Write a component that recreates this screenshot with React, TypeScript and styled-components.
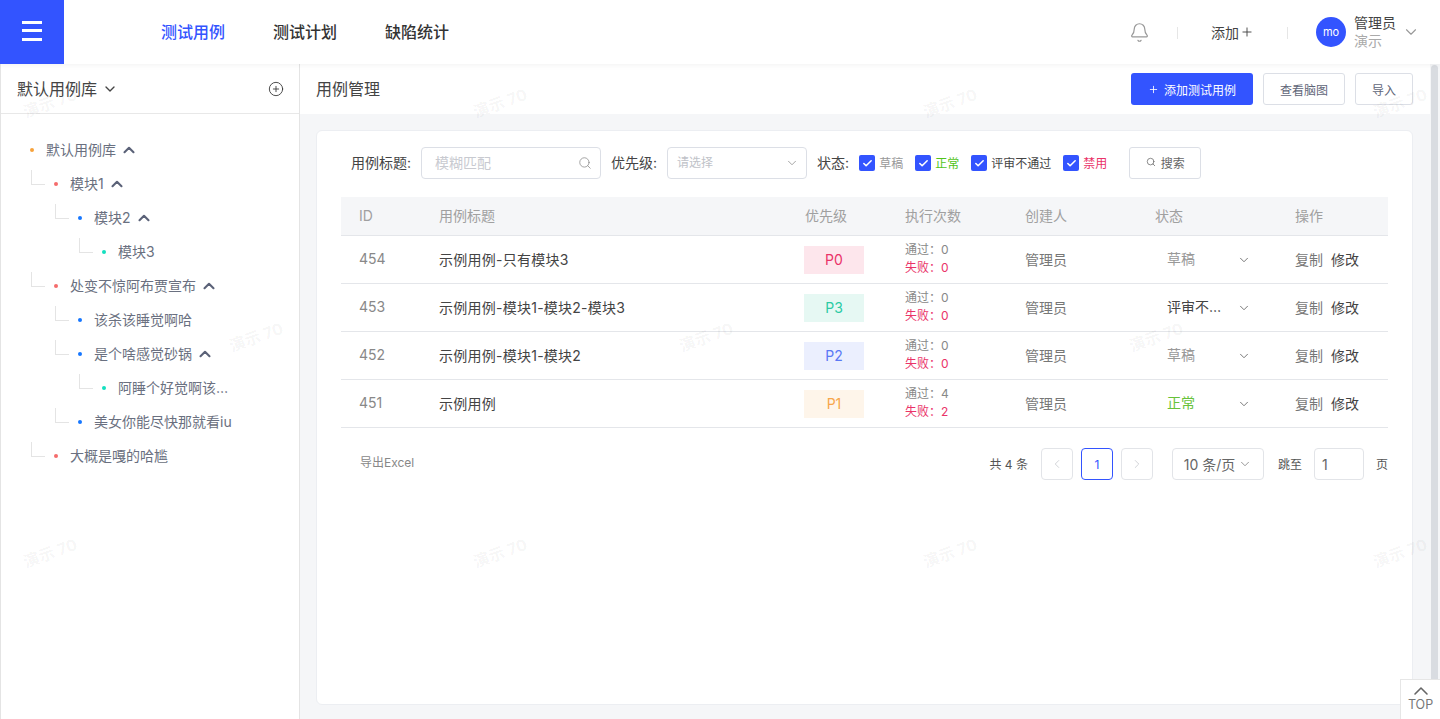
import React from 'react';
import styled, { createGlobalStyle } from 'styled-components';
import {
  Bell,
  Check,
  ChevronDown,
  ChevronLeft,
  ChevronRight,
  ChevronUp,
  CirclePlus,
  Plus,
  Search,
} from 'lucide-react';

const BLUE = '#3354ff';

const GlobalStyle = createGlobalStyle`
  html, body {
    margin: 0;
    height: 100%;
    overflow: hidden;
    background: #fff;
    font-family: Inter, "Noto Sans CJK SC", "Noto Sans", sans-serif;
    color: #333;
  }
  * { box-sizing: border-box; }
`;

type TreeNode = { label: string; level: number; color: string; open?: boolean };

const treeNodes: TreeNode[] = [
  { label: '默认用例库', level: 0, color: '#f7a23b', open: true },
  { label: '模块1', level: 1, color: '#f56c6c', open: true },
  { label: '模块2', level: 2, color: '#1677ff', open: true },
  { label: '模块3', level: 3, color: '#13e0c0' },
  { label: '处变不惊阿布贾宣布', level: 1, color: '#f56c6c', open: true },
  { label: '该杀该睡觉啊哈', level: 2, color: '#1677ff' },
  { label: '是个啥感觉砂锅', level: 2, color: '#1677ff', open: true },
  { label: '阿睡个好觉啊该…', level: 3, color: '#13e0c0' },
  { label: '美女你能尽快那就看iu', level: 2, color: '#1677ff' },
  { label: '大概是嘎的哈尴', level: 1, color: '#f56c6c' },
];

const priorities: Record<string, { bg: string; fg: string }> = {
  P0: { bg: '#fde6ec', fg: '#ea3368' },
  P1: { bg: '#fef5ea', fg: '#f7a64a' },
  P2: { bg: '#ebeffe', fg: '#5a78f5' },
  P3: { bg: '#e6f8f3', fg: '#2ccba4' },
};

const cases = [
  { id: 454, title: '示例用例-只有模块3', pri: 'P0', pass: 0, fail: 0, status: '草稿', statusColor: '#999' },
  { id: 453, title: '示例用例-模块1-模块2-模块3', pri: 'P3', pass: 0, fail: 0, status: '评审不…', statusColor: '#444' },
  { id: 452, title: '示例用例-模块1-模块2', pri: 'P2', pass: 0, fail: 0, status: '草稿', statusColor: '#999' },
  { id: 451, title: '示例用例', pri: 'P1', pass: 4, fail: 2, status: '正常', statusColor: '#67c23a' },
];

const statuses = [
  { label: '草稿', color: '#999' },
  { label: '正常', color: '#52c41a' },
  { label: '评审不通过', color: '#444' },
  { label: '禁用', color: '#ea3368' },
];

const marks = [
  ...[22, 472, 922, 1372].map((x) => ({ x, y: 90 })),
  ...[228, 678, 1128].map((x) => ({ x, y: 324 })),
  ...[22, 472, 922, 1372].map((x) => ({ x, y: 540 })),
];

export default function App() {
  return (
    <>
      <GlobalStyle />
      <Page>
        <Header>
          <MenuButton aria-label="菜单">
            <MenuBars />
          </MenuButton>
          <Nav>
            <NavItem $active>测试用例</NavItem>
            <NavItem>测试计划</NavItem>
            <NavItem>缺陷统计</NavItem>
          </Nav>
          <HeaderRight>
            <Bell size={21} strokeWidth={1.4} color="#999" />
            <Divider />
            <AddLink>
              添加
              <Plus size={14} strokeWidth={1.6} />
            </AddLink>
            <Divider />
            <UserBox>
              <Avatar>mo</Avatar>
              <UserText>
                <UserName>管理员</UserName>
                <UserRole>演示</UserRole>
              </UserText>
              <ChevronDown size={18} strokeWidth={1.5} color="#999" />
            </UserBox>
          </HeaderRight>
        </Header>
        <Body>
          <Sidebar>
            <SideHead>
              <LibraryName>
                <LibraryText>默认用例库</LibraryText>
                <ChevronDown size={16} strokeWidth={2} color="#444" />
              </LibraryName>
              <CirclePlus size={16} strokeWidth={1.3} color="#333" />
            </SideHead>
            <Tree>
              {treeNodes.map((node) => (
                <TreeRow key={node.label} $level={node.level}>
                  <TreeDot $color={node.color} />
                  <TreeLabel>{node.label}</TreeLabel>
                  {node.open && <ChevronUp size={18} strokeWidth={2.8} color="#5b6278" />}
                </TreeRow>
              ))}
            </Tree>
          </Sidebar>
          <Main>
            <TitleBar>
              <Title>用例管理</Title>
              <TitleActions>
                <PrimaryButton>
                  <Plus size={11} strokeWidth={1.8} />
                  添加测试用例
                </PrimaryButton>
                <GhostButton $width={82}>查看脑图</GhostButton>
                <GhostButton $width={58}>导入</GhostButton>
              </TitleActions>
            </TitleBar>
            <Content>
              <Card>
                <Filters>
                  <FilterLabel>用例标题:</FilterLabel>
                  <TextBox $width={180}>
                    <Placeholder>模糊匹配</Placeholder>
                    <Search size={14} strokeWidth={1.3} color="#888" />
                  </TextBox>
                  <FilterLabel>优先级:</FilterLabel>
                  <SelectBox>
                    <SmallPlaceholder>请选择</SmallPlaceholder>
                    <ChevronDown size={14} strokeWidth={1.3} color="#888" />
                  </SelectBox>
                  <FilterLabel>状态:</FilterLabel>
                  <CheckGroup>
                    {statuses.map((s) => (
                      <CheckItem key={s.label} $color={s.color}>
                        <CheckBox>
                          <Check size={11} strokeWidth={3.4} color="#fff" />
                        </CheckBox>
                        <CheckText>{s.label}</CheckText>
                      </CheckItem>
                    ))}
                  </CheckGroup>
                  <SearchButton>
                    <Search size={10} strokeWidth={1.8} />
                    搜索
                  </SearchButton>
                </Filters>
                <Table>
                  <HeadRow>
                    <HeadCell>ID</HeadCell>
                    <HeadCell>用例标题</HeadCell>
                    <HeadCell>优先级</HeadCell>
                    <HeadCell>执行次数</HeadCell>
                    <HeadCell>创建人</HeadCell>
                    <HeadCell>状态</HeadCell>
                    <HeadCell>操作</HeadCell>
                  </HeadRow>
                  {cases.map((c) => (
                    <DataRow key={c.id}>
                      <IdCell>{c.id}</IdCell>
                      <TitleCell>{c.title}</TitleCell>
                      <PriorityTag $bg={priorities[c.pri].bg} $fg={priorities[c.pri].fg}>
                        {c.pri}
                      </PriorityTag>
                      <Counts>
                        <PassCount>通过：{c.pass}</PassCount>
                        <FailCount>失败：{c.fail}</FailCount>
                      </Counts>
                      <Creator>管理员</Creator>
                      <StatusSelect $color={c.statusColor}>
                        <StatusText>{c.status}</StatusText>
                        <ChevronDown size={14} strokeWidth={1.5} color="#666" />
                      </StatusSelect>
                      <Operations>
                        <span>复制</span>
                        <span>修改</span>
                      </Operations>
                    </DataRow>
                  ))}
                </Table>
                <TableFoot>
                  <ExportLink>导出Excel</ExportLink>
                  <Pager>
                    <PagerText>共 4 条</PagerText>
                    <PageButton $disabled>
                      <ChevronLeft size={14} strokeWidth={1.3} />
                    </PageButton>
                    <PageButton $active>1</PageButton>
                    <PageButton $disabled>
                      <ChevronRight size={14} strokeWidth={1.3} />
                    </PageButton>
                    <PageSize>
                      10 条/页
                      <ChevronDown size={14} strokeWidth={1.3} color="#777" />
                    </PageSize>
                    <PagerText>跳至</PagerText>
                    <JumpInput>1</JumpInput>
                    <PagerText>页</PagerText>
                  </Pager>
                </TableFoot>
              </Card>
            </Content>
          </Main>
          <ScrollTrack>
            <ScrollThumb />
          </ScrollTrack>
        </Body>
        {marks.map((m) => (
          <Watermark key={`${m.x}-${m.y}`} style={{ left: m.x, top: m.y }}>
            演示 70
          </Watermark>
        ))}
        <BackTop>
          <ChevronUp size={24} strokeWidth={1.6} color="#666" />
          <BackTopText>TOP</BackTopText>
        </BackTop>
      </Page>
    </>
  );
}

const Page = styled.div`
  position: relative;
  display: flex;
  flex-direction: column;
  height: 100vh;
  overflow: hidden;
`;

const Header = styled.header`
  position: relative;
  z-index: 2;
  display: flex;
  align-items: center;
  height: 64px;
  flex-shrink: 0;
  background: #fff;
  box-shadow: 0 1px 6px rgba(0, 0, 0, 0.06);
`;

const MenuButton = styled.div`
  display: flex;
  align-items: center;
  justify-content: center;
  width: 64px;
  height: 64px;
  background: ${BLUE};
`;

const MenuBars = styled.div`
  position: relative;
  width: 20px;
  height: 20px;
  margin-top: -2px;
  border-top: 3px solid #fff;
  border-bottom: 3px solid #fff;

  &::after {
    content: '';
    position: absolute;
    left: 0;
    right: 0;
    top: 5px;
    height: 3px;
    background: #fff;
  }
`;

const Nav = styled.nav`
  display: flex;
  gap: 48px;
  margin-left: 97px;
`;

const NavItem = styled.a<{ $active?: boolean }>`
  font-size: 16px;
  font-weight: 500;
  line-height: 24px;
  color: ${(p) => (p.$active ? BLUE : '#333')};
`;

const HeaderRight = styled.div`
  display: flex;
  align-items: center;
  margin-left: auto;
  padding-right: 20px;
`;

const Divider = styled.i`
  width: 1px;
  height: 12px;
  margin: 2px 33px 0;
  background: #e6e6e6;

  &:first-of-type {
    margin-left: 27px;
  }
`;

const AddLink = styled.div`
  display: flex;
  align-items: center;
  gap: 1px;
  font-size: 14px;
  color: #444;
`;

const UserBox = styled.div`
  display: flex;
  align-items: center;
  margin-left: -5px;
`;

const Avatar = styled.div`
  display: flex;
  align-items: center;
  justify-content: center;
  width: 30px;
  height: 30px;
  border-radius: 50%;
  background: ${BLUE};
  color: #fff;
  font-size: 11px;
`;

const UserText = styled.div`
  display: flex;
  flex-direction: column;
  margin: 0 6px 0 8px;
`;

const UserName = styled.span`
  font-size: 14px;
  line-height: 18px;
  color: #444;
`;

const UserRole = styled.span`
  font-size: 14px;
  line-height: 18px;
  color: #aaa;
`;

const Body = styled.div`
  display: flex;
  flex: 1;
  min-height: 0;
`;

const Sidebar = styled.aside`
  width: 300px;
  flex-shrink: 0;
  background: #fff;
  border-left: 1px solid #e4e4e4;
  border-right: 1px solid #e4e4e4;
`;

const SideHead = styled.div`
  display: flex;
  align-items: center;
  justify-content: space-between;
  height: 50px;
  padding: 0 15px 0 16px;
  border-bottom: 1px solid #e8e8e8;
`;

const LibraryName = styled.div`
  display: flex;
  align-items: center;
  gap: 5px;
`;

const LibraryText = styled.span`
  padding-bottom: 2px;
  font-size: 16px;
  color: #444;
`;

const Tree = styled.div`
  display: flex;
  flex-direction: column;
  padding-top: 19px;
`;

const TreeRow = styled.div<{ $level: number }>`
  position: relative;
  display: flex;
  align-items: center;
  height: 34px;
  padding-left: ${(p) => 29 + p.$level * 24}px;

  ${(p) =>
    p.$level > 0 &&
    `&::before {
      content: '';
      position: absolute;
      left: ${6 + p.$level * 24}px;
      top: 3px;
      width: 13px;
      height: 14px;
      border-left: 1px solid #e4e4e4;
      border-bottom: 1px solid #e4e4e4;
    }`}
`;

const TreeDot = styled.i<{ $color: string }>`
  width: 4px;
  height: 4px;
  border-radius: 50%;
  background: ${(p) => p.$color};
  margin-right: 12px;
  flex-shrink: 0;
`;

const TreeLabel = styled.span`
  padding-bottom: 2px;
  font-size: 14px;
  color: #6a7080;
  margin-right: 4px;
  white-space: nowrap;
`;

const Main = styled.main`
  display: flex;
  flex-direction: column;
  flex: 1;
  min-width: 0;
  background: #f5f6f8;
`;

const TitleBar = styled.div`
  display: flex;
  align-items: center;
  justify-content: space-between;
  height: 50px;
  flex-shrink: 0;
  padding: 0 17px 0 16px;
  background: #fff;
`;

const Title = styled.h1`
  margin: 0;
  padding-bottom: 2px;
  font-size: 16px;
  font-weight: 400;
  color: #444;
`;

const TitleActions = styled.div`
  display: flex;
  gap: 10px;
`;

const PrimaryButton = styled.button`
  display: flex;
  align-items: center;
  justify-content: center;
  gap: 5px;
  width: 122px;
  height: 32px;
  padding: 0;
  border: 0;
  border-radius: 3px;
  background: ${BLUE};
  color: #fff;
  font: inherit;
  font-size: 12px;
`;

const GhostButton = styled.button<{ $width: number }>`
  width: ${(p) => p.$width}px;
  height: 32px;
  padding: 0;
  border: 1px solid #dcdfe6;
  border-radius: 3px;
  background: #fff;
  color: #5f6678;
  font: inherit;
  font-size: 12px;
`;

const Content = styled.div`
  flex: 1;
  min-height: 0;
  padding: 16px 17px 14px 16px;
`;

const Card = styled.section`
  height: 100%;
  padding: 16px 24px 0 24px;
  background: #fff;
  border: 1px solid #eceef2;
  border-radius: 6px;
`;

const Filters = styled.div`
  display: flex;
  align-items: center;
  height: 32px;
  padding-left: 10px;
`;

const FilterLabel = styled.label`
  padding-bottom: 2px;
  font-size: 14px;
  color: #444;
  margin-right: 10px;
  white-space: nowrap;
`;

const TextBox = styled.div<{ $width: number }>`
  display: flex;
  align-items: center;
  justify-content: space-between;
  width: ${(p) => p.$width}px;
  height: 32px;
  padding: 0 8px 0 13px;
  margin-right: 10px;
  border: 1px solid #dcdfe6;
  border-radius: 4px;
`;

const Placeholder = styled.span`
  padding-bottom: 3px;
  font-size: 14px;
  color: #c8cad0;
`;

const SelectBox = styled(TextBox).attrs({ $width: 140 })`
  padding: 0 7px 0 9px;
`;

const SmallPlaceholder = styled.span`
  padding-bottom: 4px;
  font-size: 12px;
  color: #c0c2c8;
`;

const CheckGroup = styled.div`
  display: flex;
`;

const CheckItem = styled.div<{ $color: string }>`
  display: flex;
  align-items: center;
  gap: 4px;
  margin-right: 12px;
  font-size: 12px;
  color: ${(p) => p.$color};
  white-space: nowrap;
`;

const CheckBox = styled.span`
  display: flex;
  align-items: center;
  justify-content: center;
  width: 16px;
  height: 16px;
  border-radius: 2px;
  background: ${BLUE};
`;

const CheckText = styled.span`
  padding-bottom: 2px;
`;

const SearchButton = styled.button`
  display: flex;
  align-items: center;
  justify-content: center;
  gap: 5px;
  width: 72px;
  height: 32px;
  padding: 0 0 2px;
  margin-left: 10px;
  border: 1px solid #dcdfe6;
  border-radius: 3px;
  background: #fff;
  color: #666;
  font: inherit;
  font-size: 12px;
`;

const Table = styled.div`
  margin-top: 18px;
`;

const columns = '98px 366px 100px 120px 130px 140px 1fr';

const HeadRow = styled.div`
  display: grid;
  grid-template-columns: ${columns};
  align-items: center;
  height: 39px;
  background: #f5f6f8;
  border-bottom: 1px solid #e4e6ea;
`;

const HeadCell = styled.div`
  padding-bottom: 2px;
  font-size: 14px;
  color: #a0a0a0;

  &:first-child {
    padding-left: 18px;
  }
`;

const DataRow = styled.div`
  display: grid;
  grid-template-columns: ${columns};
  align-items: center;
  height: 48px;
  border-bottom: 1px solid #e4e6ea;
`;

const IdCell = styled.div`
  padding: 0 0 2px 18px;
  font-size: 14px;
  color: #888;
`;

const TitleCell = styled.div`
  padding-bottom: 2px;
  font-size: 14px;
  letter-spacing: 0.25px;
  color: #444;
`;

const PriorityTag = styled.div<{ $bg: string; $fg: string }>`
  display: flex;
  align-items: center;
  justify-content: center;
  width: 60px;
  height: 28px;
  margin-left: -1px;
  background: ${(p) => p.$bg};
  color: ${(p) => p.$fg};
  font-size: 14px;
`;

const Counts = styled.div`
  display: flex;
  flex-direction: column;
  padding-bottom: 1px;
  font-size: 12px;
  line-height: 18px;
`;

const PassCount = styled.span`
  color: #888;
`;

const FailCount = styled.span`
  color: #ea3368;
`;

const Creator = styled.div`
  padding-bottom: 2px;
  font-size: 14px;
  color: #777;
`;

const StatusSelect = styled.div<{ $color: string }>`
  display: flex;
  align-items: center;
  justify-content: space-between;
  padding: 0 44px 0 12px;
  font-size: 14px;
  color: ${(p) => p.$color};
`;

const StatusText = styled.span`
  padding-bottom: 4px;
`;

const Operations = styled.div`
  display: flex;
  gap: 8px;
  padding-bottom: 2px;
  font-size: 14px;
  color: #777;

  span:last-child {
    color: #444;
  }
`;

const TableFoot = styled.div`
  display: flex;
  align-items: center;
  justify-content: space-between;
  margin-top: 20px;
  height: 32px;
`;

const ExportLink = styled.a`
  padding: 0 0 6px 19px;
  font-size: 12px;
  color: #888;
`;

const Pager = styled.div`
  display: flex;
  align-items: center;
  gap: 8px;
`;

const PagerText = styled.span`
  padding-bottom: 2px;
  font-size: 12px;
  color: #555;
  white-space: nowrap;

  &:first-child {
    margin-right: 5px;
  }
`;

const PageButton = styled.div<{ $active?: boolean; $disabled?: boolean }>`
  display: flex;
  align-items: center;
  justify-content: center;
  width: 32px;
  height: 32px;
  border: 1px solid ${(p) => (p.$active ? BLUE : '#e2e4e8')};
  border-radius: 4px;
  font-size: 12px;
  color: ${(p) => (p.$active ? BLUE : p.$disabled ? '#c4c6cc' : '#555')};
`;

const PageSize = styled.div`
  display: flex;
  align-items: center;
  justify-content: center;
  gap: 3px;
  width: 92px;
  height: 32px;
  margin: 0 6px 0 11px;
  border: 1px solid #e2e4e8;
  border-radius: 4px;
  font-size: 14px;
  color: #666;
  white-space: nowrap;
`;

const JumpInput = styled.div`
  display: flex;
  align-items: center;
  width: 50px;
  height: 32px;
  padding-left: 7px;
  margin: 0 4px;
  border: 1px solid #e2e4e8;
  border-radius: 4px;
  font-size: 14px;
  color: #666;
`;

const ScrollTrack = styled.div`
  width: 10px;
  flex-shrink: 0;
  padding: 1px 2px 0 1px;
  background: #f5f6f8;
`;

const ScrollThumb = styled.div`
  height: 100%;
  border-radius: 4px 4px 0 0;
  background: #d9dce1;
`;

const Watermark = styled.div`
  position: absolute;
  z-index: 3;
  transform: rotate(-20deg);
  pointer-events: none;
  font-size: 16px;
  font-weight: 700;
  color: rgba(0, 0, 0, 0.05);
  white-space: nowrap;
`;

const BackTop = styled.div`
  position: absolute;
  z-index: 4;
  right: 0;
  bottom: 0;
  display: flex;
  flex-direction: column;
  align-items: center;
  width: 40px;
  height: 40px;
  background: #fff;
  border: 1px solid #e6e6e6;
  border-right: 0;
  border-bottom: 0;

  svg {
    margin-top: -1px;
    flex-shrink: 0;
  }
`;

const BackTopText = styled.span`
  margin-top: -5px;
  font-size: 12.5px;
  line-height: 14px;
  color: #777;
`;
